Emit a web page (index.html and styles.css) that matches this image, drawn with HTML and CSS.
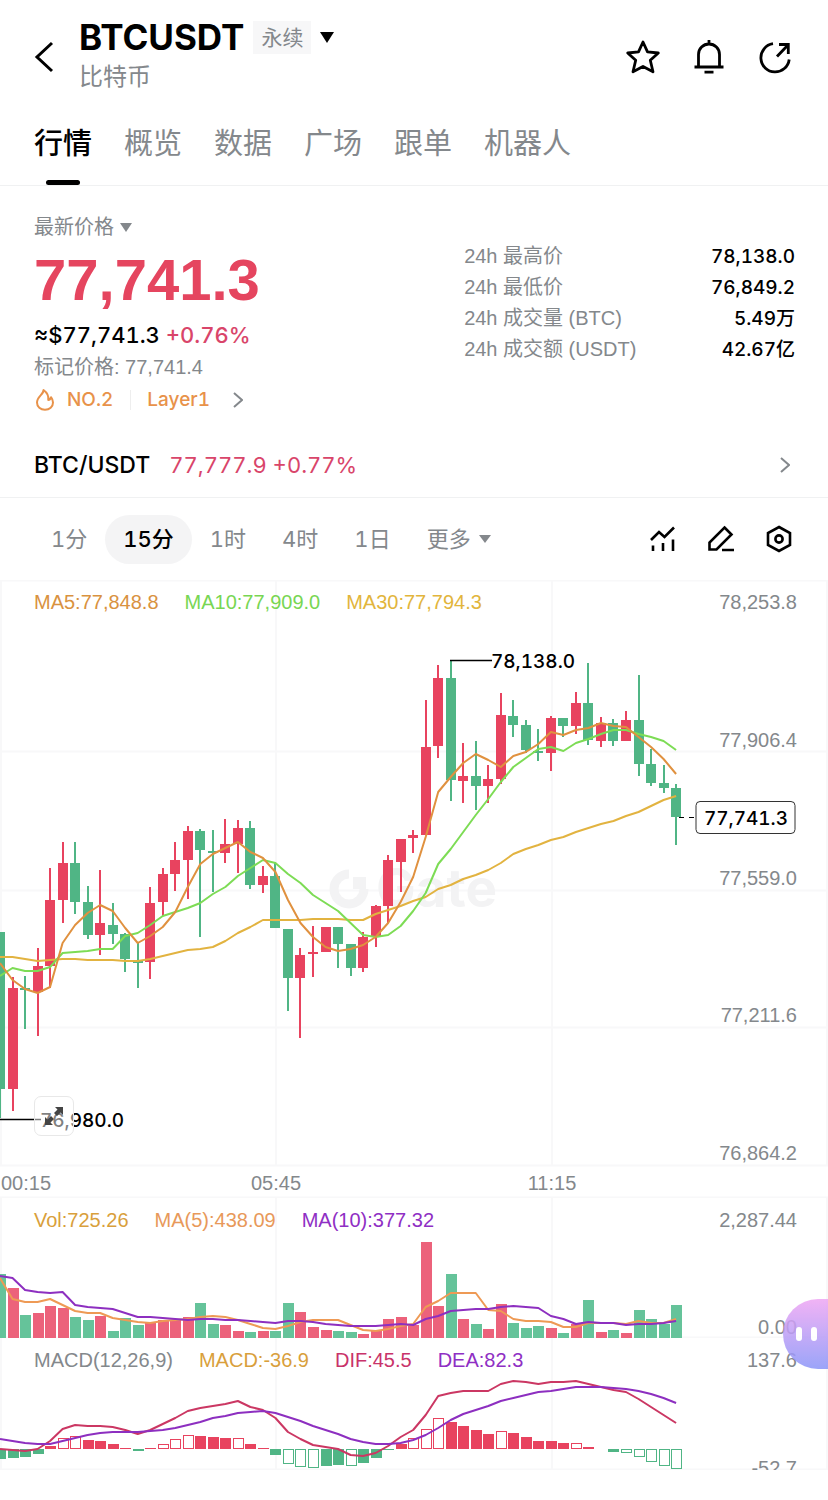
FILE: index.html
```html
<!DOCTYPE html>
<html lang="zh-CN">
<head>
  <meta charset="UTF-8">
  <meta name="viewport" content="width=device-width, initial-scale=1">
  <title>BTCUSDT 永续</title>
  <link rel="stylesheet" href="styles.css">
</head>
<body>

<header class="header">
  <button class="icon-btn back" aria-label="返回">
    <svg width="20" height="32" viewBox="0 0 20 32"><path d="M18 2 L3 16 L18 30" fill="none" stroke="#000" stroke-width="3"/></svg>
  </button>
  <div class="pair">
    <div class="pair-top">
      <h1>BTCUSDT</h1>
      <span class="badge">永续</span>
      <button class="icon-btn" aria-label="切换交易对">
        <svg width="14" height="11" viewBox="0 0 14 11"><path d="M0 0 H14 L7 11 Z"/></svg>
      </button>
    </div>
    <div class="pair-name">比特币</div>
  </div>
  <div class="actions">
    <button class="icon-btn" aria-label="收藏">
      <svg width="36" height="36" viewBox="0 0 36 36"><path d="M18 3 L22.5 12.8 L33.3 14 L25.3 21.3 L28 32.8 L18 27.4 L8 32.8 L10.7 21.3 L2.7 14 L13.5 12.8 Z" fill="none" stroke="#000" stroke-width="2.8" stroke-linejoin="round"/></svg>
    </button>
    <button class="icon-btn" aria-label="提醒">
      <svg width="36" height="36" viewBox="0 0 36 36"><path d="M7.5 28 V15.5 A10.5 10.5 0 0 1 28.5 15.5 V28 M3.5 28 H32.5 M18 5 V1 M13.5 33.2 H22.5" fill="none" stroke="#000" stroke-width="2.8"/></svg>
    </button>
    <button class="icon-btn" aria-label="分享">
      <svg width="36" height="36" viewBox="0 0 36 36"><path d="M16 4.7 A14.2 14.2 0 1 0 32.2 20.5 M20 17.5 L31 6 M22 5.5 H31.3 V15" fill="none" stroke="#000" stroke-width="2.8"/></svg>
    </button>
  </div>
</header>

<nav class="tabs">
  <a href="#market" class="active">行情</a>
  <a href="#overview">概览</a>
  <a href="#data">数据</a>
  <a href="#square">广场</a>
  <a href="#copy">跟单</a>
  <a href="#bot">机器人</a>
</nav>

<section class="info">
  <div class="price-box">
    <button class="price-type">最新价格
      <svg width="12" height="9" viewBox="0 0 12 9"><path d="M0 0 H12 L6 9 Z" fill="#84888c"/></svg>
    </button>
    <div class="price">77,741.3</div>
    <div class="fiat">≈$77,741.3 <span class="up">+0.76%</span></div>
    <div class="mark">标记价格: 77,741.4</div>
    <div class="tags">
      <svg width="22" height="24" viewBox="0 0 22 24"><path d="M9.5 2 C10 6 3 8.5 3 14.5 C3 19 6.5 21.8 11 21.8 C15.5 21.8 19 19 19 14.5 C19 12 18 10.5 17 9.2 C16.5 11 15.5 12 14.3 12 C14.8 8 13 4.5 9.5 2 Z" fill="none" stroke="#e8924a" stroke-width="2" stroke-linejoin="round"/></svg>
      <a href="#rank">NO.2</a>
      <a href="#layer1" class="layer">Layer1</a>
      <svg width="10" height="16" viewBox="0 0 10 16"><path d="M1 1 L9 8 L1 15" fill="none" stroke="#84888c" stroke-width="2"/></svg>
    </div>
  </div>
  <table class="stats">
    <tr><th>24h 最高价</th><td>78,138.0</td></tr>
    <tr><th>24h 最低价</th><td>76,849.2</td></tr>
    <tr><th>24h 成交量 (BTC)</th><td>5.49万</td></tr>
    <tr><th>24h 成交额 (USDT)</th><td>42.67亿</td></tr>
  </table>
</section>

<a href="#spot" class="spot">
  <span class="spot-name">BTC/USDT</span>
  <span class="spot-price">77,777.9 +0.77%</span>
  <svg width="10" height="16" viewBox="0 0 10 16"><path d="M1 1 L9 8 L1 15" fill="none" stroke="#84888c" stroke-width="2"/></svg>
</a>

<div class="toolbar">
  <button>1分</button>
  <button class="active">15分</button>
  <button>1时</button>
  <button>4时</button>
  <button>1日</button>
  <button class="more">更多
    <svg width="12" height="8" viewBox="0 0 12 8"><path d="M0 0 H12 L6 8 Z" fill="#84888c"/></svg>
  </button>
  <div class="tools">
    <button class="icon-btn" aria-label="指标">
      <svg width="28" height="28" viewBox="0 0 28 28"><path d="M2 15 L10 7 L15.5 12 L25 2.5 M4 20.5 V26 M14 18 V26 M24 14.5 V26" fill="none" stroke="#000" stroke-width="2.6"/></svg>
    </button>
    <button class="icon-btn" aria-label="画线">
      <svg width="28" height="28" viewBox="0 0 28 28"><path d="M17.5 2.5 L24.5 9.5 L9.5 24.5 H2.5 V17.5 Z M15 25 H27" fill="none" stroke="#000" stroke-width="2.6"/></svg>
    </button>
    <button class="icon-btn" aria-label="设置">
      <svg width="28" height="28" viewBox="0 0 28 28"><path d="M14 2 L25 8 V20 L14 26 L3 20 V8 Z" fill="none" stroke="#000" stroke-width="2.6"/><circle cx="14" cy="14" r="3.6" fill="none" stroke="#000" stroke-width="2.6"/></svg>
    </button>
  </div>
</div>

<div class="pane">
  <div class="legend">
    <span class="c-orange">MA5:77,848.8</span>
    <span class="c-green">MA10:77,909.0</span>
    <span class="c-yellow">MA30:77,794.3</span>
  </div>
  <svg class="chart" viewBox="0 580 828 618">
    <path class="grid" d="M0 580.5 H828 M0 751.5 H828 M0 890.5 H828 M0 1027.5 H828 M0 1165.5 H828 M0 1197.5 H828 M1 580 V1165 M276 580 V1165 M552 580 V1165 M827 580 V1165"/>
    <g class="watermark">
      <path d="M349 874 A15 15 0 1 0 364 889" fill="none" stroke-width="9"/>
      <path d="M353 877 H366 V889 H353 Z" stroke="none"/>
      <text x="376" y="907">Gate</text>
    </g>
    <g id="candles"></g>
    <g id="ma"></g>
    <path d="M450 660.5 H492 M0 1119.5 H41" stroke="#000" stroke-width="1.5"/>
    <text class="mark-label" x="491" y="668">78,138.0</text>
    <text class="mark-label" x="40" y="1127">76,980.0</text>
    <path d="M679 817.5 H696" stroke="#000" stroke-dasharray="5 5"/>
    <rect x="696" y="801.5" width="99" height="32" rx="4" fill="#fff" stroke="#333"/>
    <text class="last" x="746" y="825">77,741.3</text>
    <g class="axis">
      <text x="797" y="609">78,253.8</text>
      <text x="797" y="747">77,906.4</text>
      <text x="797" y="885">77,559.0</text>
      <text x="797" y="1022">77,211.6</text>
      <text x="797" y="1160">76,864.2</text>
    </g>
    <g class="axis time">
      <text x="26" y="1190">00:15</text>
      <text x="276" y="1190">05:45</text>
      <text x="552" y="1190">11:15</text>
    </g>
  </svg>
  <button class="expand" aria-label="全屏">
    <svg width="22" height="22" viewBox="0 0 22 22"><path d="M12 2 H20 V10 L17.5 7.5 L14 11 L11 8 L14.5 4.5 Z M2 20 H10 L7.5 17.5 L11 14 L8 11 L4.5 14.5 L2 12 Z" fill="#444"/></svg>
  </button>
</div>

<div class="pane">
  <div class="legend">
    <span class="c-gold">Vol:725.26</span>
    <span class="c-orange2">MA(5):438.09</span>
    <span class="c-purple">MA(10):377.32</span>
  </div>
  <svg class="chart" viewBox="0 1198 828 140">
    <path class="grid" d="M1 1198 V1338 M276 1198 V1338 M552 1198 V1338 M827 1198 V1338 M0 1337.5 H828"/>
    <g id="volume"></g>
    <g class="axis">
      <text x="797" y="1227">2,287.44</text>
      <text x="797" y="1334">0.00</text>
    </g>
  </svg>
  <button class="bot" aria-label="智能助手"><i></i><i></i></button>
</div>

<div class="pane">
  <div class="legend">
    <span class="c-gray">MACD(12,26,9)</span>
    <span class="c-gold">MACD:-36.9</span>
    <span class="c-pink">DIF:45.5</span>
    <span class="c-purple">DEA:82.3</span>
  </div>
  <svg class="chart" viewBox="0 1338 828 132">
    <path class="grid" d="M1 1338 V1470 M276 1338 V1470 M552 1338 V1470 M827 1338 V1470 M0 1469.5 H828"/>
    <g id="macd"></g>
    <g class="axis">
      <text x="797" y="1367">137.6</text>
      <text x="797" y="1475">-52.7</text>
    </g>
  </svg>
</div>

<script src="chart.js"></script>
</body>
</html>
```
FILE: styles.css
```css
* {
  margin: 0;
  padding: 0;
  box-sizing: border-box;
}

body {
  font-family: Inter, "Noto Sans CJK SC", sans-serif;
  font-variant-numeric: tabular-nums;
  background-color: #fff;
  color: #000;
  overflow-x: hidden;
}

a {
  color: inherit;
  text-decoration: none;
}

button {
  font: inherit;
  font-variant-numeric: inherit;
  color: inherit;
  border: none;
  background: none;
  cursor: pointer;
}

svg {
  display: block;
}

.icon-btn {
  display: flex;
}

/* header */
.header {
  display: flex;
  align-items: center;
  padding: 17px 35px 21px 34px;
}

.back {
  width: 45px;
}

.pair-top {
  display: flex;
  align-items: center;
  gap: 9px;
  height: 40px;
}

h1 {
  font-size: 35px;
  font-weight: 700;
}

.badge {
  font-size: 21px;
  line-height: 33px;
  padding: 0 8px;
  background-color: #f7f7f8;
  color: #84888c;
}

.pair-name {
  font-size: 24px;
  line-height: 40px;
  color: #84888c;
}

.actions {
  display: flex;
  gap: 30px;
  margin-left: auto;
}

/* tabs */
.tabs {
  display: flex;
  gap: 32px;
  padding: 0 34px;
  border-bottom: 1px solid #f0f1f2;
}

.tabs a {
  position: relative;
  font-size: 29px;
  line-height: 52px;
  padding-bottom: 15px;
  color: #84888c;
}

.tabs .active {
  color: #000;
  font-weight: 500;
}

.tabs .active::after {
  content: "";
  position: absolute;
  left: 12px;
  right: 12px;
  bottom: 0;
  height: 5px;
  border-radius: 3px;
  background-color: #000;
}

/* price info */
.info {
  display: grid;
  grid-template-columns: 13fr 10fr;
  align-items: start;
  padding: 25px 33px 14px 34px;
}

.price-type {
  display: flex;
  align-items: center;
  gap: 6px;
  font-size: 20px;
  line-height: 32px;
  color: #84888c;
}

.price {
  font-family: "Liberation Sans", Arial, sans-serif;
  font-size: 58px;
  font-weight: 700;
  line-height: 74px;
  color: #e5455f;
}

.fiat {
  font-size: 22px;
  font-weight: 500;
  line-height: 36px;
}

.up {
  color: #d9456a;
}

.mark {
  font-family: "Liberation Sans", "Noto Sans CJK SC", sans-serif;
  font-size: 20px;
  line-height: 28px;
  color: #84888c;
}

.tags {
  display: flex;
  align-items: center;
  gap: 11px;
  font-size: 19px;
  font-weight: 500;
  line-height: 38px;
  color: #e8924a;
}

.layer {
  line-height: 20px;
  margin: 0 12px 0 6px;
  padding-left: 16px;
  border-left: 1px solid #eee;
}

.stats {
  margin-top: 30px;
  border-collapse: collapse;
  font-size: 20px;
  line-height: 31px;
}

.stats th {
  font-family: "Liberation Sans", "Noto Sans CJK SC", sans-serif;
  font-weight: 400;
  text-align: left;
  color: #84888c;
}

.stats td {
  font-size: 19px;
  font-weight: 500;
  text-align: right;
}

/* spot pair row */
.spot {
  display: flex;
  align-items: center;
  gap: 19px;
  height: 65px;
  padding: 0 38px 0 34px;
  font-size: 22px;
  border-bottom: 1px solid #f0f1f2;
}

.spot-name {
  font-size: 23px;
  font-weight: 500;
}

.spot-price {
  color: #d9456a;
}

.spot svg {
  margin-left: auto;
}

/* intervals */
.toolbar {
  display: flex;
  align-items: center;
  height: 82px;
  padding: 0 35px 0 33px;
  font-size: 22px;
  color: #84888c;
}

.toolbar > button {
  line-height: 49px;
  padding: 0 18px;
  border-radius: 25px;
}

.toolbar .active {
  background-color: #f4f4f5;
  color: #000;
  font-weight: 500;
}

.toolbar .more {
  display: flex;
  align-items: center;
  gap: 8px;
}

.tools {
  display: flex;
  gap: 30px;
  margin-left: auto;
}

/* charts */
.pane {
  position: relative;
}

.chart {
  width: 100%;
  height: auto;
}

.legend {
  position: absolute;
  top: 8px;
  left: 34px;
  display: flex;
  gap: 26px;
  font-family: "Liberation Sans", Arial, sans-serif;
  font-size: 20px;
  line-height: 28px;
}

.c-orange { color: #d9923f; }
.c-orange2 { color: #e8995a; }
.c-green { color: #78d653; }
.c-yellow { color: #e2b53c; }
.c-gold { color: #d99f3c; }
.c-purple { color: #8f2fc4; }
.c-pink { color: #c9336a; }
.c-gray { color: #84888c; }

.grid {
  fill: none;
  stroke: #f8f8f9;
  stroke-width: 2;
}

.watermark {
  fill: #f3f3f4;
  stroke: #f3f3f4;
}

.watermark text {
  font-size: 53px;
  font-weight: 700;
  stroke: none;
}

.axis text {
  font-family: "Liberation Sans", Arial, sans-serif;
  font-size: 20px;
  text-anchor: end;
  fill: #84888c;
}

.axis.time text {
  text-anchor: middle;
}

.mark-label {
  font-size: 19px;
  font-weight: 500;
}

.last {
  font-size: 19px;
  font-weight: 500;
  text-anchor: middle;
}

.line {
  fill: none;
  stroke-width: 2;
  stroke-linejoin: round;
}

.expand {
  position: absolute;
  left: 34px;
  bottom: 62px;
  width: 40px;
  height: 40px;
  display: flex;
  align-items: center;
  justify-content: center;
  border: 1px solid #e8e8e8;
  border-radius: 7px;
  background-color: rgba(255, 255, 255, 0.5);
}

.bot {
  position: absolute;
  z-index: 1;
  right: 0;
  bottom: -31px;
  width: 45px;
  height: 70px;
  display: flex;
  align-items: center;
  gap: 9px;
  padding-left: 13px;
  border-radius: 35px 0 0 35px;
  background: linear-gradient(#efa6f4, #8a95f8);
  opacity: 0.85;
}

.bot i {
  width: 6px;
  height: 14px;
  border-radius: 3px;
  background-color: #fff;
}
```
FILE: chart.js
```javascript
const STEP = 12.52;
const RED = '#e8435f';
const GREEN = '#50b585';

// high, body top, body bottom, low, direction
const candles = [
  [932,932,1089,1118,'g'],[977,988,1089,1111,'r'],[976,988,990,1029,'g'],[948,966,992,1036,'r'],[868,900,966,988,'r'],
  [842,863,900,923,'r'],[842,863,902,914,'g'],[886,902,935,939,'g'],[870,923,935,955,'r'],[903,925,934,944,'g'],
  [933,934,959,972,'g'],[943,961,962,988,'g'],[887,903,962,979,'r'],[868,874,902,916,'r'],[842,860,874,891,'r'],
  [826,831,860,899,'r'],[829,831,850,937,'g'],[830,851,853,892,'g'],[819,844,853,863,'r'],[820,828,844,873,'r'],
  [821,828,885,889,'g'],[866,876,885,893,'r'],[863,876,928,928,'g'],[929,929,978,1011,'g'],[948,955,978,1038,'r'],
  [926,952,954,977,'r'],[927,927,952,952,'r'],[927,927,944,968,'g'],[944,944,968,976,'g'],[932,937,968,972,'r'],
  [905,906,936,947,'r'],[855,860,906,923,'r'],[839,839,862,892,'r'],[830,835,838,853,'r'],[700,747,835,835,'r'],
  [665,678,746,758,'r'],[660,678,780,801,'g'],[743,776,781,803,'r'],[741,776,786,810,'g'],[765,779,786,803,'r'],
  [693,715,779,784,'r'],[700,716,725,737,'g'],[720,725,750,753,'g'],[729,751,753,761,'g'],[716,718,753,771,'r'],
  [718,718,726,737,'g'],[692,703,726,734,'r'],[663,703,740,745,'g'],[717,723,741,747,'r'],[719,723,741,746,'g'],
  [711,720,741,741,'r'],[675,720,764,776,'g'],[749,764,783,786,'g'],[765,783,788,793,'g'],[784,788,817,845,'g']
];

const ma5 = [963,980,989,993,987,943,925,913,905,911,928,943,936,927,912,887,864,854,848,842,852,858,872,900,923,937,947,951,949,945,937,923,902,877,837,792,777,763,754,760,767,756,752,744,732,735,730,728,723,726,727,737,747,759,774];
const ma10 = [976,968,971,971,967,953,952,951,949,949,936,933,925,916,912,908,903,894,887,876,868,860,863,874,883,895,903,911,923,935,937,935,926,911,893,864,849,832,815,799,782,767,758,749,747,751,743,739,734,730,730,734,737,741,750];
const ma30 = [957,957,959,961,960,959,959,960,960,960,961,961,959,956,953,950,949,947,941,933,927,920,920,920,920,919,919,919,920,920,914,910,906,901,897,889,885,879,875,870,863,854,849,845,840,837,832,828,824,821,816,812,806,800,796];

const vol = [1274,1288,1315,1313,1306,1308,1317,1320,1316,1331,1318,1325,1322,1320,1320,1317,1303,1324,1325,1331,1332,1331,1331,1303,1312,1327,1330,1331,1332,1334,1331,1319,1317,1325,1242,1306,1274,1319,1324,1329,1304,1323,1328,1326,1328,1333,1324,1300,1332,1330,1333,1310,1319,1324,1305];
const volMa5 = [1278,1299,1302,1302,1299,1305,1311,1313,1313,1318,1320,1322,1323,1321,1320,1319,1317,1316,1317,1320,1324,1328,1329,1326,1322,1320,1320,1320,1325,1330,1331,1329,1326,1324,1307,1301,1293,1293,1293,1310,1311,1319,1321,1321,1322,1327,1327,1323,1323,1323,1324,1321,1323,1323,1319];
const volMa10 = [1276,1278,1290,1292,1293,1292,1305,1307,1308,1309,1313,1317,1317,1318,1319,1320,1319,1319,1320,1320,1321,1322,1323,1321,1321,1322,1324,1325,1326,1326,1326,1325,1324,1325,1319,1316,1311,1310,1309,1309,1307,1306,1307,1308,1316,1319,1324,1322,1323,1323,1325,1324,1324,1323,1321];

// histogram ends; the rising bars are drawn hollow
const ZERO = 1449;
const macd = [1459,1458,1457,1454,1446,1438,1436,1440,1441,1444,1448,1451,1448,1444,1439,1435,1436,1437,1438,1438,1444,1448,1455,1464,1467,1468,1466,1465,1466,1463,1458,1450,1444,1438,1429,1418,1422,1426,1430,1434,1431,1433,1437,1441,1441,1443,1443,1447,1449,1452,1453,1457,1462,1466,1469];
const hollow = [5,6,13,14,15,19,23,24,25,28,33,34,35,40,46,50,51,52,53,54];
const dif = [1449,1450,1451,1449,1441,1429,1425,1426,1426,1427,1430,1434,1430,1424,1418,1411,1408,1406,1404,1401,1407,1410,1418,1432,1439,1445,1447,1449,1455,1456,1453,1446,1437,1430,1415,1396,1393,1391,1391,1391,1384,1381,1382,1384,1382,1382,1381,1384,1387,1390,1392,1399,1407,1415,1423];
const dea = [1439,1441,1443,1444,1444,1441,1438,1435,1433,1432,1432,1432,1431,1430,1428,1425,1422,1418,1416,1413,1412,1411,1413,1417,1421,1426,1430,1434,1439,1442,1444,1444,1443,1440,1435,1428,1420,1414,1410,1406,1401,1398,1395,1392,1391,1389,1387,1387,1387,1388,1389,1391,1394,1398,1403];

function add(id, tag, attrs) {
  const el = document.createElementNS('http://www.w3.org/2000/svg', tag);
  for (const key in attrs) {
    el.setAttribute(key, attrs[key]);
  }
  document.getElementById(id).appendChild(el);
}

function line(id, data, color) {
  const points = data.map((y, i) => i * STEP + ',' + y).join(' ');
  add(id, 'polyline', { points: points, stroke: color, class: 'line' });
}

function rect(id, x, y, width, height, fill) {
  add(id, 'rect', { x: x, y: y, width: width, height: height, fill: fill });
}

candles.forEach(([high, top, bottom, low, dir], i) => {
  const x = Math.round(i * STEP);
  const color = dir == 'r' ? RED : GREEN;
  rect('candles', x - 1, high, 2, low - high, color);
  rect('candles', x - 5, top, 10, Math.max(bottom - top, 2), color);
  rect('volume', x - 5, vol[i], 11, 1338 - vol[i], dir == 'r' ? '#ec627b' : '#65c39a');
});

macd.forEach((y, i) => {
  const x = Math.round(i * STEP) - 5;
  const color = y < ZERO ? RED : GREEN;
  const top = Math.min(y, ZERO);
  const height = Math.abs(y - ZERO);
  if (hollow.includes(i)) {
    add('macd', 'rect', { x: x + 0.5, y: top + 0.5, width: 10, height: height - 1, fill: '#fff', stroke: color });
  } else {
    rect('macd', x, top, 11, height, color);
  }
});

line('ma', ma30, '#e2b340');
line('ma', ma10, '#7ddc55');
line('ma', ma5, '#e0913f');
line('volume', volMa5, '#ee9a55');
line('volume', volMa10, '#8d2fc0');
line('macd', dif, '#cb3763');
line('macd', dea, '#8d2fc0');
```
